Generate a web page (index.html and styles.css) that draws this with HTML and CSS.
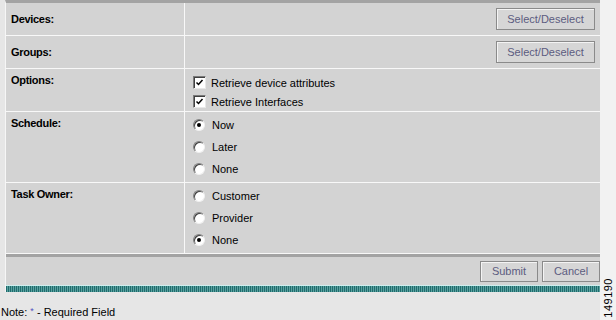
FILE: index.html
```html
<!DOCTYPE html>
<html>
<head>
    <title>Task</title>
    <link rel="stylesheet" href="styles.css">
</head>
<body>
<div class="page">
    <div class="main">
        <div class="panel">
            <div class="row row-short">
                <div class="label label-mid">Devices:</div>
                <div class="value value-end"><button type="button" class="btn btn-wide">Select/Deselect</button></div>
            </div>
            <div class="row row-short">
                <div class="label label-mid">Groups:</div>
                <div class="value value-end"><button type="button" class="btn btn-wide">Select/Deselect</button></div>
            </div>
            <div class="row row-options">
                <div class="label">Options:</div>
                <div class="value checks">
                    <div class="choice"><span class="checkbox"><svg width="9" height="9" viewBox="0 0 9 9"><path d="M1.5 4.5 L3.5 6.5 L7.5 2" fill="none" stroke="#000" stroke-width="1.5"/></svg></span>Retrieve device attributes</div>
                    <div class="choice"><span class="checkbox"><svg width="9" height="9" viewBox="0 0 9 9"><path d="M1.5 4.5 L3.5 6.5 L7.5 2" fill="none" stroke="#000" stroke-width="1.5"/></svg></span>Retrieve Interfaces</div>
                </div>
            </div>
            <div class="row row-radios">
                <div class="label">Schedule:</div>
                <div class="value radios">
                    <div class="choice"><span class="radio on"></span>Now</div>
                    <div class="choice"><span class="radio"></span>Later</div>
                    <div class="choice"><span class="radio"></span>None</div>
                </div>
            </div>
            <div class="row row-radios">
                <div class="label">Task Owner:</div>
                <div class="value radios">
                    <div class="choice"><span class="radio"></span>Customer</div>
                    <div class="choice"><span class="radio"></span>Provider</div>
                    <div class="choice"><span class="radio on"></span>None</div>
                </div>
            </div>
            <div class="actions">
                <button type="button" class="btn btn-small">Submit</button>
                <button type="button" class="btn btn-small">Cancel</button>
            </div>
            <div class="stripe"></div>
        </div>
        <div class="note">Note: <span class="req">*</span> - Required Field</div>
    </div>
    <div class="side"><span class="fig">149190</span></div>
</div>
</body>
</html>
```

FILE: styles.css
```css
body {
    margin: 0;
    background-color: #e6e6e6;
    font-family: "Liberation Sans", Arial, sans-serif;
    font-size: 11px;
    color: #000;
}
.page {
    display: flex;
    width: 616px;
    height: 320px;
}
.main {
    width: 600px;
    display: flex;
    flex-direction: column;
}
.panel {
    margin-left: 5px;
    width: 594px;
    border-left: 1px solid #f6f6f6;
    border-top: 3px solid #a3a3a3;
    background-color: #d3d3d3;
}
.row {
    display: flex;
    border-bottom: 1px solid #f8f8f8;
}
.row-short {
    height: 32px;
}
.row-options {
    height: 42px;
}
.row-radios {
    height: 70px;
}
.label {
    width: 173px;
    padding: 5px 0 0 5px;
    border-right: 1px solid #f8f8f8;
    font-weight: bold;
    letter-spacing: -0.3px;
    line-height: 13px;
}
.label-mid {
    padding-top: 0;
    display: flex;
    align-items: center;
}
.value {
    flex: 1;
    padding-left: 8px;
}
.value-end {
    display: flex;
    justify-content: flex-end;
    align-items: center;
    padding-right: 5px;
}
.checks {
    padding-top: 4px;
}
.checks .choice {
    height: 19px;
}
.radios {
    padding-top: 2px;
}
.radios .choice {
    height: 22px;
}
.choice {
    display: flex;
    align-items: center;
}
.checkbox {
    width: 11px;
    height: 11px;
    margin-right: 5px;
    background-color: #fff;
    border: 1px solid;
    border-color: #7a7a7a #e8e8e8 #e8e8e8 #7a7a7a;
    box-shadow: inset 1px 1px #404040;
    display: flex;
    align-items: center;
    justify-content: center;
}
.radio {
    width: 12px;
    height: 12px;
    margin-right: 7px;
    box-sizing: border-box;
    border-radius: 50%;
    background-color: #fff;
    border: 1px solid;
    border-color: #808080 #f0f0f0 #f0f0f0 #808080;
    box-shadow: inset 1px 1px #404040;
    position: relative;
}
.radio.on::after {
    content: "";
    position: absolute;
    left: 3px;
    top: 3px;
    width: 4px;
    height: 4px;
    border-radius: 50%;
    background-color: #000;
}
.btn {
    height: 22px;
    background-color: #d6d6d6;
    border: 1px solid #8a8a8a;
    box-shadow: inset 1px 1px #f4f4f4;
    font-family: "Liberation Sans", Arial, sans-serif;
    font-size: 11px;
    color: #5c5c80;
    padding: 0;
}
.btn-wide {
    width: 99px;
}
.btn-small {
    width: 58px;
    height: 21px;
}
.actions {
    border-top: 3px solid #a3a3a3;
    height: 28px;
    display: flex;
    justify-content: flex-end;
    align-items: center;
    gap: 4px;
    padding-right: 0;
}
.stripe {
    height: 6px;
    border-top: 1px solid #cdeeee;
    background: repeating-linear-gradient(90deg, #1f6c6c 0, #1f6c6c 1px, #5aa0a0 1px, #5aa0a0 2px);
}
.note {
    margin-top: 13px;
    padding-left: 1px;
    line-height: 13px;
}
.req {
    color: #5050c0;
    font-size: 9px;
    vertical-align: 2px;
}
.side {
    flex: 1;
    display: flex;
    align-items: flex-end;
    justify-content: center;
    padding-bottom: 2px;
    background-color: #f2f2f2;
}
.fig {
    writing-mode: vertical-rl;
    transform: rotate(180deg);
    font-size: 11px;
    letter-spacing: 0.5px;
}
```
